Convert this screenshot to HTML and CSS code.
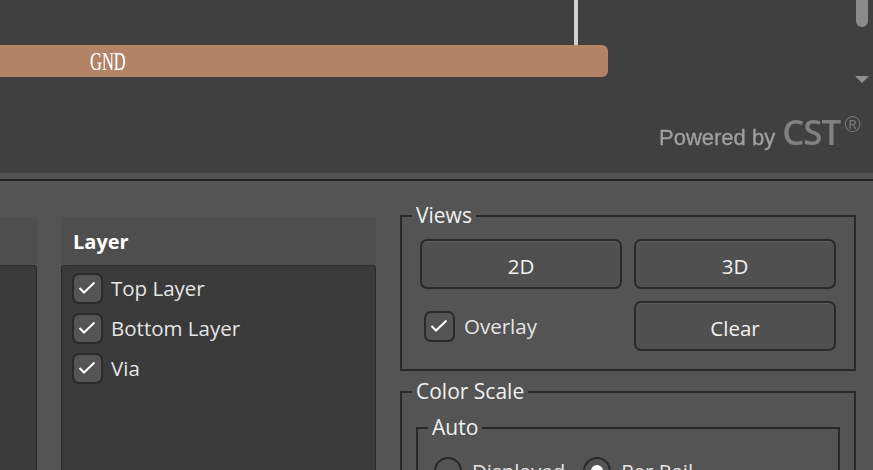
FILE: index.html
```html
<!DOCTYPE html>
<html lang="en">

<head>
    <meta charset="UTF-8">
    <title>Layer view</title>
    <link rel="stylesheet" href="styles.css">
</head>

<body>
    <div class="canvas">
        <div class="trace"></div>
        <div class="rail"><span class="rail-name">GND</span></div>
        <div class="thumb"></div>
        <div class="arrow"></div>
        <div class="powered"><span class="powered-by">Powered by</span><span class="cst">CST</span><span class="reg">®</span></div>
    </div>
    <div class="strip"></div>
    <div class="panel">
        <div class="group group-cut">
            <div class="group-head"></div>
            <div class="group-list"></div>
        </div>
        <div class="group group-layer">
            <div class="group-head">Layer</div>
            <div class="group-list">
                <label class="row">
                    <span class="check"><svg viewBox="0 0 20 20"><polyline points="1.5,10 6,14.5 16.5,4.5"/></svg></span>
                    <span>Top Layer</span>
                </label>
                <label class="row">
                    <span class="check"><svg viewBox="0 0 20 20"><polyline points="1.5,10 6,14.5 16.5,4.5"/></svg></span>
                    <span>Bottom Layer</span>
                </label>
                <label class="row">
                    <span class="check"><svg viewBox="0 0 20 20"><polyline points="1.5,10 6,14.5 16.5,4.5"/></svg></span>
                    <span>Via</span>
                </label>
            </div>
        </div>
        <div class="side">
            <fieldset class="box box-views">
                <legend>Views</legend>
                <div class="views-grid">
                    <button class="btn">2D</button>
                    <button class="btn">3D</button>
                    <label class="row row-overlay">
                        <span class="check"><svg viewBox="0 0 20 20"><polyline points="1.5,10 6,14.5 16.5,4.5"/></svg></span>
                        <span>Overlay</span>
                    </label>
                    <button class="btn">Clear</button>
                </div>
            </fieldset>
            <fieldset class="box box-scale">
                <legend>Color Scale</legend>
                <fieldset class="box box-auto">
                    <legend>Auto</legend>
                    <div class="radios">
                        <label class="radio-row"><span class="radio"></span><span>Displayed</span></label>
                        <label class="radio-row"><span class="radio radio-on"></span><span>Per Rail</span></label>
                    </div>
                </fieldset>
            </fieldset>
        </div>
    </div>
</body>

</html>
```

FILE: styles.css
```css
* {
    margin: 0;
    padding: 0;
    box-sizing: border-box;
}

html,
body {
    height: 470px;
    overflow: hidden;
}

body {
    display: flex;
    flex-direction: column;
    background: #545454;
    color: #e4e4e4;
    font-family: "Open Sans", "Liberation Sans", sans-serif;
    font-size: 20.5px;
}

/* free canvas, everything in here sits at its drawn place */
.canvas {
    position: relative;
    height: 173px;
    background: #404040;
    flex: none;
}

.trace {
    position: absolute;
    left: 574px;
    top: 0;
    width: 4px;
    height: 45px;
    background: #cfcfcf;
}

.rail {
    position: absolute;
    left: -20px;
    top: 45px;
    width: 628px;
    height: 32px;
    background: #b28366;
    border-radius: 6px;
}

.rail-name {
    position: absolute;
    left: 110px;
    top: 2px;
    color: #fff;
    font-family: "Liberation Serif", serif;
    font-size: 25px;
    line-height: 30px;
    -webkit-text-stroke: 0.2px #fff;
    transform: scaleX(0.66);
    transform-origin: left center;
}

.thumb {
    position: absolute;
    left: 856px;
    top: -10px;
    width: 12px;
    height: 37px;
    background: #8a8a8a;
    border-radius: 6px;
}

.arrow {
    position: absolute;
    left: 855px;
    top: 76px;
    border-left: 7px solid transparent;
    border-right: 7px solid transparent;
    border-top: 7px solid #8f8f8f;
}

.powered {
    position: absolute;
    left: 659px;
    top: 110px;
    display: flex;
    align-items: baseline;
    color: #a0a0a0;
    font-family: "Liberation Sans", sans-serif;
    filter: blur(0.5px);
    white-space: nowrap;
}

.powered-by {
    font-size: 22px;
    -webkit-text-stroke: 0.3px #a0a0a0;
}

.cst {
    margin-left: 7px;
    font-family: "Open Sans", sans-serif;
    font-size: 35px;
    font-weight: 600;
    line-height: 44px;
    letter-spacing: -1px;
    color: #808080;
}

.reg {
    align-self: flex-start;
    margin: 3px 0 0 4px;
    font-size: 22px;
    line-height: 24px;
    color: #787878;
}

.strip {
    flex: none;
    height: 8px;
    background: #525252;
    border-bottom: 2px solid #222;
}

.panel {
    flex: 1;
    display: flex;
    padding-top: 36px;
    min-height: 0;
}

.group {
    display: flex;
    flex-direction: column;
    flex: none;
}

.group-cut {
    width: 37px;
    margin-right: 24px;
}

.group-layer {
    width: 315px;
    margin-right: 24px;
}

.group-head {
    height: 48px;
    flex: none;
    padding: 8px 0 0 12px;
    background: #4e4e4e;
    color: #fff;
    font-size: 20px;
    font-weight: 700;
    line-height: 34px;
}

.group-list {
    flex: 1;
    padding: 3px 0 0 11px;
    background: #3a3a3a;
    border-radius: 4px 4px 0 0;
    box-shadow: inset -1px 0 #2a2a2a, inset 1px 0 #2a2a2a, inset 0 1px #333;
}

.group-cut .group-list {
    box-shadow: inset -1px 0 #2a2a2a, inset 0 1px #333;
    border-radius: 0 4px 0 0;
}

.row {
    display: flex;
    align-items: center;
    gap: 8px;
    height: 40px;
}

.check {
    width: 31px;
    height: 31px;
    flex: none;
    display: flex;
    align-items: center;
    justify-content: center;
    background: #545454;
    border: 2px solid #2a2a2a;
    border-radius: 7px;
}

.check svg {
    width: 20px;
    height: 20px;
    fill: none;
    stroke: #fff;
    stroke-width: 2;
}

.side {
    width: 456px;
    flex: none;
    margin-top: -15px;
}

.box {
    border: 2px solid #282828;
    min-width: 0;
}

.box legend {
    margin-left: 10px;
    padding: 0 4px 2px;
    color: #f0f0f0;
    font-size: 21px;
    line-height: 26px;
}

.box-views {
    height: 169px;
}

.views-grid {
    display: grid;
    grid-template-columns: 202px 202px;
    grid-template-rows: 50px 50px;
    column-gap: 12px;
    row-gap: 12px;
    padding: 9px 0 0 18px;
}

.btn {
    background: #505050;
    border: 2px solid #2a2a2a;
    border-radius: 7px;
    box-shadow: inset 0 1px #5e5e5e;
    color: #f0f0f0;
    font-family: inherit;
    font-size: 20.5px;
    padding-top: 3px;
}

.row-overlay {
    height: 50px;
    padding-left: 4px;
    gap: 9px;
}

.box-scale {
    margin-top: 7px;
    height: 200px;
    padding-top: 8px;
}

.box-auto {
    width: 424px;
    height: 120px;
    margin-left: 14px;
}

.radios {
    display: flex;
    gap: 18px;
    padding: 15px 0 0 16px;
}

.radio-row {
    display: flex;
    align-items: center;
    gap: 10px;
}

.radio {
    width: 28px;
    height: 28px;
    flex: none;
    border: 2px solid #2a2a2a;
    border-radius: 50%;
    background: #545454;
    display: flex;
    align-items: center;
    justify-content: center;
}

.radio-on::after {
    content: "";
    width: 12px;
    height: 12px;
    border-radius: 50%;
    background: #fff;
}
```
